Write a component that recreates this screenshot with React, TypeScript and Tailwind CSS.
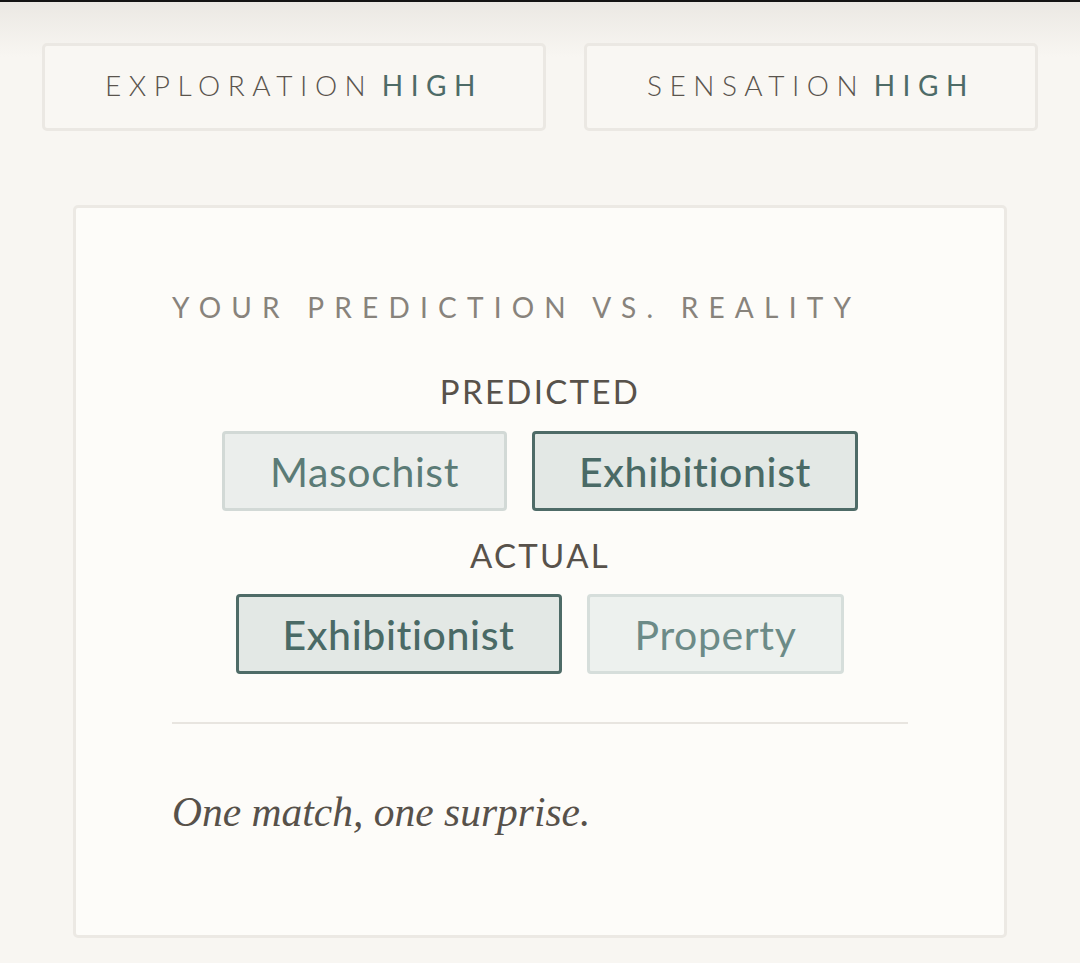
import React from "react";

type Pill = {
  label: string;
  hit: boolean;
  muted?: boolean;
};

const predicted: Pill[] = [
  { label: "Masochist", hit: false },
  { label: "Exhibitionist", hit: true },
];

const actual: Pill[] = [
  { label: "Exhibitionist", hit: true },
  { label: "Property", hit: false, muted: true },
];

const sans = "font-['Lato','Noto_Sans',sans-serif]";

const PillRow = ({ items }: { items: Pill[] }) => (
  <div className="flex justify-center gap-[25px]">
    {items.map((p) =>
      p.hit ? (
        <div
          key={p.label}
          className="h-[80px] px-[44px] flex items-center rounded-[4px] border-[3px] border-[#4e6b67] bg-[#e3e8e5] text-[#4a6a66] text-[41px] tracking-[0.015em] leading-none font-medium"
        >
          {p.label}
        </div>
      ) : (
        <div
          key={p.label}
          className={
            p.muted
              ? "h-[80px] px-[45px] flex items-center rounded-[4px] border-[3px] border-[#d6dedb] bg-[#edf1ee] text-[#6c8b87] text-[41px] tracking-[0.015em] leading-none"
              : "h-[80px] px-[45px] flex items-center rounded-[4px] border-[3px] border-[#d2d9d6] bg-[#ebeeec] text-[#5b7b76] text-[41px] tracking-[0.015em] leading-none"
          }
        >
          {p.label}
        </div>
      )
    )}
  </div>
);

const StatBox = ({ name, level, width }: { name: string; level: string; width: string }) => (
  <div
    className={`${width} h-[88px] pb-[5px] flex items-center justify-center rounded-[5px] border-[3px] border-[#ebe8e3] bg-[#f9f7f3] text-[28px] tracking-[0.27em] leading-none`}
  >
    <span className="text-[#5a544d] font-light">{name}</span>
    <span className="ml-[0.3em] text-[#4e6b67]">{level}</span>
  </div>
);

export default function App() {
  return (
    <div
      className={`${sans} min-h-screen border-t-2 border-[#141414] bg-[#f8f6f2] bg-[linear-gradient(to_bottom,#ebe8e3,#f8f6f2_55px)] px-[42px] pt-[41px] pb-[26px]`}
    >
      {/* stat summary */}
      <div className="flex gap-[38px]">
        <StatBox name="EXPLORATION" level="HIGH" width="w-[505px]" />
        <StatBox name="SENSATION" level="HIGH" width="w-[455px]" />
      </div>

      {/* prediction card */}
      <div className="mt-[74px] ml-[31px] w-[934px] rounded-[5px] border-[3px] border-[#ece9e4] bg-[#fdfcf9] px-[96px] pt-[79px] pb-[97px]">
        <h3 className="h-[40px] flex items-center text-[28px] tracking-[0.365em] text-[#88837c] leading-none">
          YOUR PREDICTION VS. REALITY
        </h3>

        <p className="mt-[44px] h-[40px] flex items-center justify-center text-[33px] tracking-[0.07em] text-[#58524b] leading-none">
          PREDICTED
        </p>
        <div className="mt-[20px]">
          <PillRow items={predicted} />
        </div>

        <p className="mt-[24px] h-[40px] flex items-center justify-center text-[33px] tracking-[0.07em] text-[#58524b] leading-none">
          ACTUAL
        </p>
        <div className="mt-[19px]">
          <PillRow items={actual} />
        </div>

        <div className="mt-[48px] h-[2px] bg-[#e8e5e0]" />

        <p className="mt-[64px] h-[50px] flex items-center font-['Liberation_Serif',serif] italic text-[41.5px] text-[#57514a] leading-none">
          One match, one surprise.
        </p>
      </div>
    </div>
  );
}
